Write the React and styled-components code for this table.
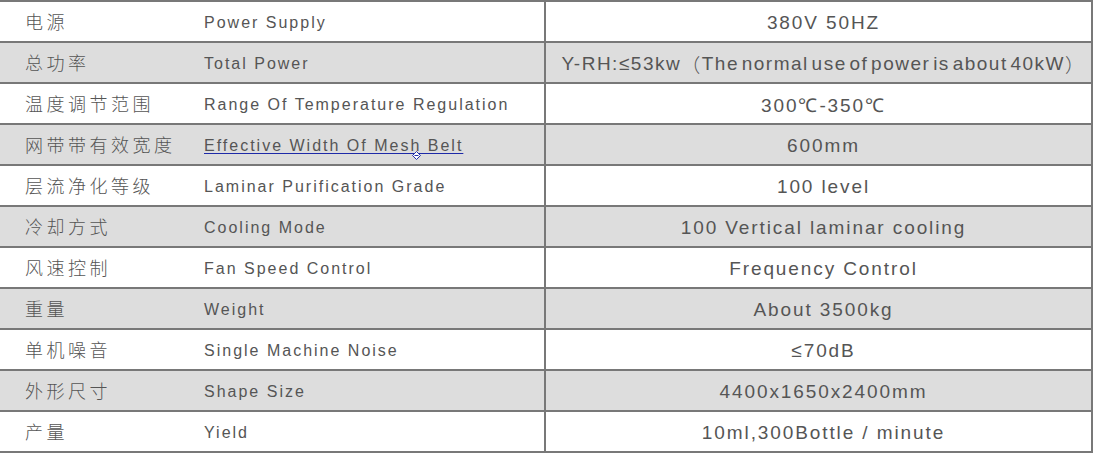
import React from "react";
import styled, { createGlobalStyle } from "styled-components";

const Global = createGlobalStyle`
  html, body { margin: 0; padding: 0; background: #fff; }
  body { font-family: "Liberation Sans", Arial, sans-serif; }
`;

const Table = styled.div`
  width: 1093px;
  box-sizing: border-box;
  border-top: 2px solid #787878;
  border-right: 2px solid #787878;
`;

const Row = styled.div`
  display: grid;
  grid-template-columns: 204px 340px 1fr;
  height: 41px;
  box-sizing: border-box;
  border-bottom: 2px solid #787878;
  background: ${(p) => (p.$shaded ? "#dddddd" : "#ffffff")};
  color: #555;
`;

const Cn = styled.div`
  display: flex;
  align-items: center;
  padding-left: 25px;
  font-family: "Noto Sans CJK SC", "Noto Sans", sans-serif;
  font-size: 18px;
  font-weight: 300;
  letter-spacing: 3.5px;
  padding-bottom: 2px;
`;

const En = styled.div`
  display: flex;
  align-items: center;
  font-size: 16px;
  letter-spacing: 2px;
  padding-top: 3px;
  white-space: nowrap;
`;

const LinkText = styled.span`
  position: relative;
  text-decoration: underline;
  text-decoration-color: #1e2aa8;
  text-underline-offset: 2px;
`;

const Cursor = styled.svg`
  position: absolute;
  left: 208px;
  top: 14px;
  width: 9px;
  height: 9px;
`;

const Val = styled.div`
  display: flex;
  align-items: center;
  justify-content: center;
  border-left: 2px solid #787878;
  padding-left: 10px;
  font-size: 19px;
  letter-spacing: ${(p) => (p.$tight ? "1.5px" : "1.9px")};
  word-spacing: ${(p) => (p.$tight ? "-4px" : "0")};
  padding-top: 3px;
  white-space: nowrap;
`;

const Paren = styled.span`
  font-family: "Noto Sans CJK SC", sans-serif;
  font-weight: 300;
`;

const rows = [
  ["电源", "Power Supply", "380V 50HZ"],
  [
    "总功率",
    "Total Power",
    <>
      Y-RH:≤53kw<Paren>（</Paren>The normal use of power is about 40kW<Paren>）</Paren>
    </>,
    true,
  ],
  ["温度调节范围", "Range Of Temperature Regulation", "300℃-350℃"],
  ["网带带有效宽度", "Effective Width Of Mesh Belt", "600mm", false, true],
  ["层流净化等级", "Laminar Purification Grade", "100 level"],
  ["冷却方式", "Cooling Mode", "100 Vertical laminar cooling"],
  ["风速控制", "Fan Speed Control", "Frequency Control"],
  ["重量", "Weight", "About 3500kg"],
  ["单机噪音", "Single Machine Noise", "≤70dB"],
  ["外形尺寸", "Shape Size", "4400x1650x2400mm"],
  ["产量", "Yield", "10ml,300Bottle / minute"],
];

export default function App() {
  return (
    <>
      <Global />
      <Table>
        {rows.map(([cn, en, val, tight, link], i) => (
          <Row key={cn} $shaded={i % 2 === 1}>
            <Cn>{cn}</Cn>
            <En>
              {link ? (
                <LinkText>
                  {en}
                  <Cursor viewBox="0 0 9 9">
                    <path d="M4.5 0.5 L8.5 4.5 L4.5 8.5 L0.5 4.5 Z" fill="#fff" stroke="#2233aa" strokeWidth="1" />
                    <path d="M2.5 4.5 H6.5" stroke="#2233aa" strokeWidth="1" />
                  </Cursor>
                </LinkText>
              ) : (
                en
              )}
            </En>
            <Val $tight={tight}>{val}</Val>
          </Row>
        ))}
      </Table>
    </>
  );
}
